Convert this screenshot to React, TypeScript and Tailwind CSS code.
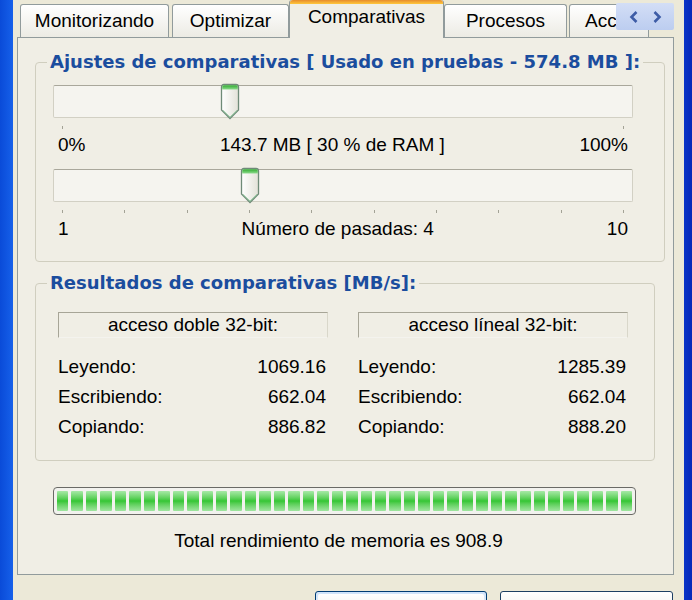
import React from "react";

const tabs = [
  { label: "Monitorizando", w: "w-[149px]", gap: "ml-[7px]" },
  { label: "Optimizar", w: "w-[117px]", gap: "ml-[3px]" },
  { label: "Comparativas", w: "w-[155px]", gap: "", active: true },
  { label: "Procesos", w: "w-[123px]", gap: "" },
  { label: "Acceso", w: "w-[80px]", gap: "ml-[2px]" },
];

function Thumb() {
  return (
    <svg width="20" height="37" viewBox="0 0 20 37">
      <defs>
        <linearGradient id="thumbBody" x1="0" y1="0" x2="1" y2="0">
          <stop offset="0" stopColor="#ffffff" />
          <stop offset="1" stopColor="#e2e1d8" />
        </linearGradient>
        <linearGradient id="thumbTop" x1="0" y1="0" x2="0" y2="1">
          <stop offset="0" stopColor="#2faa2f" />
          <stop offset="1" stopColor="#8fdc8f" />
        </linearGradient>
      </defs>
      <path
        d="M1.5 4 Q1.5 1.5 4 1.5 H16 Q18.5 1.5 18.5 4 V27 L10 35.5 L1.5 27 Z"
        fill="url(#thumbBody)"
        stroke="#6f8a78"
        strokeWidth="1.3"
      />
      <path d="M2.2 4 Q2.2 2.2 4 2.2 H16 Q17.8 2.2 17.8 4 V6.5 H2.2 Z" fill="url(#thumbTop)" />
      <path d="M3 27.5 L10 34.3 L17 27.5" fill="none" stroke="#7fc08f" strokeWidth="1" />
    </svg>
  );
}

function Slider({ pos, ticks }: { pos: number; ticks: number }) {
  return (
    <div>
      <div className="relative">
        <div className="h-[33px] rounded-[2px] border border-[#d2d0c4] border-t-[#a9a79b] bg-[#f5f4ef]" />
        <div className="absolute top-[-2px]" style={{ left: pos - 10 }}>
          <Thumb />
        </div>
      </div>
      <div className="mt-[8px] flex justify-between px-[9px]">
        {Array.from({ length: ticks }).map((_, i) => (
          <span key={i} className="h-[3px] w-px bg-[#a3a296]" />
        ))}
      </div>
    </div>
  );
}

function ResultCol({ title, rows }: { title: string; rows: [string, string][] }) {
  return (
    <div className="w-[270px]">
      <div className="flex h-[26px] items-center justify-center border border-[#a7a597] border-b-[#f4f3ee] border-r-[#d9d7ca]">
        {title}
      </div>
      <div className="mt-[14px]">
        {rows.map(([k, v]) => (
          <div key={k} className="flex h-[30px] items-center justify-between pr-[2px]">
            <span>{k}</span>
            <span>{v}</span>
          </div>
        ))}
      </div>
    </div>
  );
}

export default function App() {
  return (
    <div className="flex h-[600px] w-[692px] overflow-hidden bg-[#ece9d8] font-['Liberation_Sans',Arial,sans-serif] text-[19px] leading-[20px] text-black">
      <div className="w-[13px] shrink-0 bg-linear-to-r from-[#0a4bd8] to-[#1660ea]" />

      <div className="w-[671px] shrink-0">
        {/* tab strip */}
        <div className="relative flex h-[37px] items-end">
          {tabs.map((t) =>
            t.active ? (
              <div
                key={t.label}
                className={`${t.w} relative z-10 mb-[-1px] h-[38px] shrink-0 rounded-t-[3px] border-x border-[#919b9c] bg-[#f0eee5]`}
              >
                <div className="h-[4px] rounded-t-[3px] bg-linear-to-b from-[#e68b2c] to-[#ffc83c]" />
                <div className="pt-[3px] text-center">{t.label}</div>
              </div>
            ) : (
              <div
                key={t.label}
                className={`${t.w} ${t.gap} h-[33px] shrink-0 overflow-hidden whitespace-nowrap rounded-t-[3px] border border-b-0 border-[#919b9c] bg-linear-to-b from-white to-[#ecebe4] pt-[6px] ${
                  t.label === "Acceso" ? "pl-[15px]" : "text-center"
                }`}
              >
                {t.label}
              </div>
            )
          )}
          <div className="absolute left-[603px] top-[3px] z-20 flex h-[27px] w-[58px] items-center justify-around rounded-[2px] bg-linear-to-b from-[#d3def6] to-[#bccdf0] px-[6px]">
            <svg width="10" height="14" viewBox="0 0 10 14">
              <path d="M7.5 2 L2.5 7 L7.5 12" fill="none" stroke="#3d5ca6" strokeWidth="2.6" />
            </svg>
            <svg width="10" height="14" viewBox="0 0 10 14">
              <path d="M2.5 2 L7.5 7 L2.5 12" fill="none" stroke="#3d5ca6" strokeWidth="2.6" />
            </svg>
          </div>
        </div>

        {/* tab panel */}
        <div className="ml-[4px] h-[538px] w-[657px] border border-[#919b9c] bg-[#f0eee5]">
          <fieldset className="ml-[17px] mt-[14px] w-[620px] rounded-[4px] border border-[#d0cebf] pb-[22px] pl-[17px] pr-[21px]">
            <legend className="ml-[-6px] max-w-none whitespace-nowrap px-[3px] font-['DejaVu_Sans',sans-serif] text-[18px] font-bold text-[#1b4d9e]">
              Ajustes de comparativas [ Usado en pruebas - 574.8 MB ]:
            </legend>
            <div className="w-[580px]">
              <div className="mt-[13px]">
                <Slider pos={177} ticks={2} />
                <div className="mt-[6px] flex justify-between px-[5px]">
                  <span>0%</span>
                  <span>143.7 MB [ 30 % de RAM ]</span>
                  <span>100%</span>
                </div>
              </div>
              <div className="mt-[14px]">
                <Slider pos={197} ticks={10} />
                <div className="mt-[6px] flex justify-between px-[5px]">
                  <span>1</span>
                  <span>Número de pasadas: 4</span>
                  <span>10</span>
                </div>
              </div>
            </div>
          </fieldset>

          <fieldset className="ml-[17px] mt-[11px] w-[620px] rounded-[4px] border border-[#d0cebf] pb-[18px] pl-[22px] pr-[26px]">
            <legend className="ml-[-11px] whitespace-nowrap px-[3px] font-['DejaVu_Sans',sans-serif] text-[18px] font-bold text-[#1b4d9e]">
              Resultados de comparativas [MB/s]:
            </legend>
            <div className="mt-[19px] flex gap-[30px]">
              <ResultCol
                title="acceso doble 32-bit:"
                rows={[
                  ["Leyendo:", "1069.16"],
                  ["Escribiendo:", "662.04"],
                  ["Copiando:", "886.82"],
                ]}
              />
              <ResultCol
                title="acceso líneal 32-bit:"
                rows={[
                  ["Leyendo:", "1285.39"],
                  ["Escribiendo:", "662.04"],
                  ["Copiando:", "888.20"],
                ]}
              />
            </div>
          </fieldset>

          <div className="ml-[35px] mt-[26px] w-[583px]">
            <div className="flex h-[28px] gap-[3px] rounded-[4px] border border-[#6a6a66] bg-[#f2f2ee] p-[3px]">
              {Array.from({ length: 40 }).map((_, i) => (
                <span key={i} className="flex-1 rounded-[1px] bg-linear-to-b from-[#a6e9a6] via-[#34c634] to-[#9fe59f]" />
              ))}
            </div>
            <div className="mt-[16px] pr-[12px] text-center">Total rendimiento de memoria es 908.9</div>
          </div>
        </div>

        {/* dialog buttons */}
        <div className="mt-[16px] flex">
          <div className="ml-[302px] h-[28px] w-[172px] rounded-[3px] border border-[#003c74] bg-linear-to-b from-[#cfe3fb] to-[#f4f3ee] p-[2px]">
            <div className="h-full rounded-[2px] bg-linear-to-b from-white to-[#ecebe6]" />
          </div>
          <div className="ml-[13px] h-[28px] w-[173px] rounded-[3px] border border-[#1d3f63] bg-linear-to-b from-white to-[#ecebe6]" />
        </div>
      </div>

      <div className="w-[8px] shrink-0 bg-linear-to-r from-[#0a35c8] to-[#0628b8]" />
    </div>
  );
}
